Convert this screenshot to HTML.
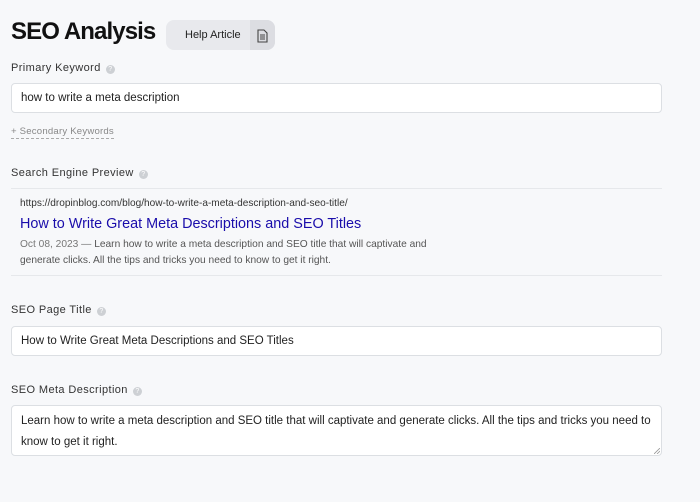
<!DOCTYPE html>
<html><head><style>
*{margin:0;padding:0;box-sizing:border-box}
body{width:700px;height:502px;background:#f7f8fa;font-family:"Liberation Sans",sans-serif;position:relative;overflow:hidden;color:#222}
.a{position:absolute}
h1{position:absolute;left:11px;top:18px;font-size:24px;font-weight:bold;letter-spacing:-0.9px;color:#111}
.btn{left:166px;top:20px;width:109px;height:30px;background:#e8e9ed;border-radius:8px;overflow:hidden}
.btn span{position:absolute;left:19px;top:9px;font-size:11px;color:#222}
.btn i{position:absolute;right:0;top:0;width:25px;height:30px;background:#dcdde2}
.lbl{left:11px;font-size:11px;letter-spacing:0.4px;color:#333}
.q{display:inline-block;width:9px;height:9px;border-radius:50%;background:#cdd0d4;color:#fff;font-size:7px;text-align:center;line-height:9px;vertical-align:0;margin-left:5px;letter-spacing:0}
.in{left:11px;width:651px;background:#fff;border:1px solid #dcdfe3;border-radius:4px;font-size:11.5px;color:#222;padding-left:9px}
.line{left:11px;width:651px;height:1px;background:#e6e8eb}
</style></head><body>
<h1>SEO Analysis</h1>
<div class="a btn"><span>Help Article</span><i><svg width="25" height="30" viewBox="0 0 25 30"><path d="M8 10h6l3 3v9H8z" fill="none" stroke="#444" stroke-width="1.1"/><path d="M10 15h5M10 17h5M10 19h5" stroke="#444" stroke-width="0.9"/></svg></i></div>
<div class="a lbl" style="top:62px">Primary Keyword<span class="q">?</span></div>
<div class="a in" style="top:83px;height:30px;line-height:29px">how to write a meta description</div>
<div class="a" style="left:11px;top:125px;font-size:9.6px;color:#888;border-bottom:1px dashed #aaa;letter-spacing:0.2px;line-height:13px">+ Secondary Keywords</div>
<div class="a lbl" style="top:167px">Search Engine Preview<span class="q">?</span></div>
<div class="a line" style="top:188px"></div>
<div class="a" style="left:20px;top:198px;font-size:10.1px;color:#333">https://dropinblog.com/blog/how-to-write-a-meta-description-and-seo-title/</div>
<div class="a" style="left:20px;top:216px;font-size:14.4px;color:#1a0dab">How to Write Great Meta Descriptions and SEO Titles</div>
<div class="a" style="left:20px;top:237px;width:420px;font-size:10.2px;color:#555;line-height:16px"><span style="color:#777">Oct 08, 2023 — </span>Learn how to write a meta description and SEO title that will captivate and generate clicks. All the tips and tricks you need to know to get it right.</div>
<div class="a line" style="top:275px"></div>
<div class="a lbl" style="top:304px">SEO Page Title<span class="q">?</span></div>
<div class="a in" style="top:326px;height:30px;line-height:29px">How to Write Great Meta Descriptions and SEO Titles</div>
<div class="a lbl" style="top:384px">SEO Meta Description<span class="q">?</span></div>
<div class="a in" style="top:405px;height:51px;line-height:21px;padding-top:5px;padding-right:8px">Learn how to write a meta description and SEO title that will captivate and generate clicks. All the tips and tricks you need to know to get it right.
<svg class="a" style="right:1px;bottom:1px" width="6" height="6"><path d="M0 6L6 0M3 6L6 3" stroke="#999" stroke-width="0.8"/></svg></div>
</body></html>
